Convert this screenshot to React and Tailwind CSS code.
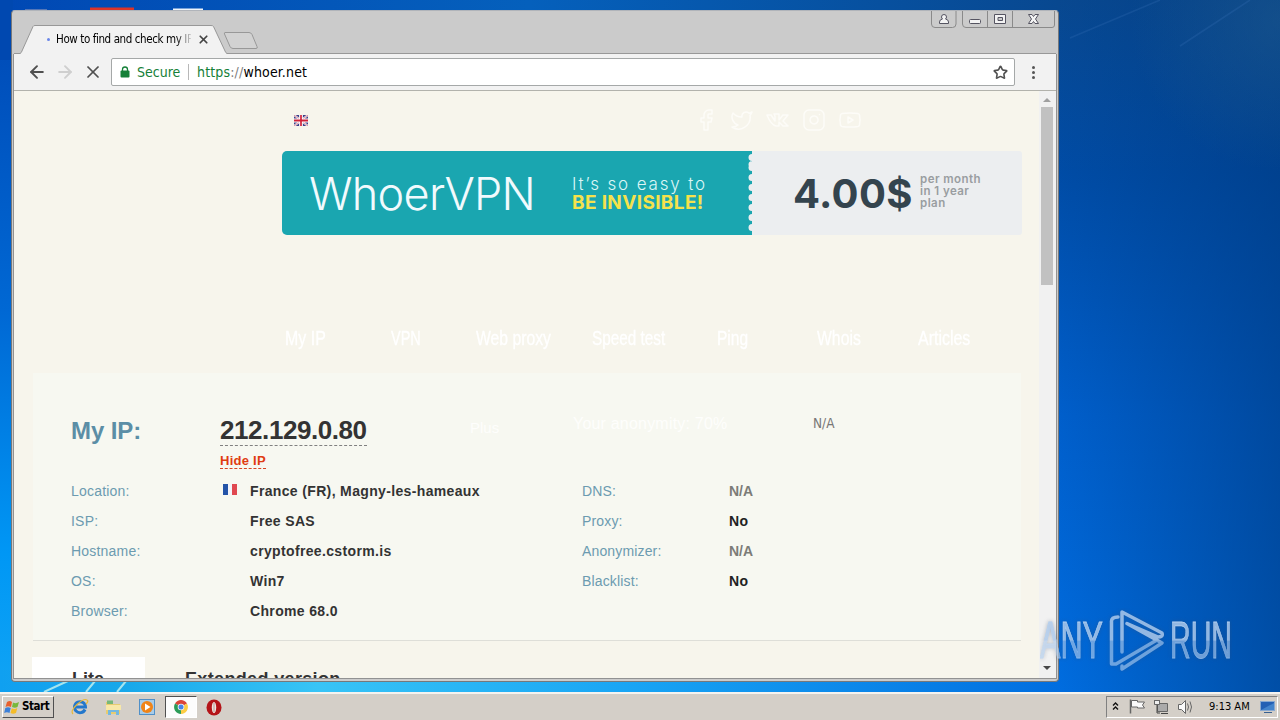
import { ArrowLeft, ArrowRight, X, Star, Facebook, Twitter, Instagram, Youtube } from 'lucide-react'

const NAV = [
  { label: 'My IP', cell: 'w-[106px]', text: 'scale-x-[0.76]' },
  { label: 'VPN', cell: 'w-[85px]', text: 'scale-x-[0.69]' },
  { label: 'Web proxy', cell: 'w-[116px]', text: 'scale-x-[0.75]' },
  { label: 'Speed test', cell: 'w-[125px]', text: 'scale-x-[0.73]' },
  { label: 'Ping', cell: 'w-[100px]', text: 'scale-x-[0.74]' },
  { label: 'Whois', cell: 'w-[101px]', text: 'scale-x-[0.75]' },
  { label: 'Articles', cell: 'w-[70px]', text: 'scale-x-[0.76]' },
]

const DETAILS = [
  { label: 'Location:', value: 'France (FR), Magny-les-hameaux', flag: true },
  { label: 'ISP:', value: 'Free SAS' },
  { label: 'Hostname:', value: 'cryptofree.cstorm.is' },
  { label: 'OS:', value: 'Win7' },
  { label: 'Browser:', value: 'Chrome 68.0' },
]

const CHECKS = [
  { label: 'DNS:', value: 'N/A', muted: true },
  { label: 'Proxy:', value: 'No' },
  { label: 'Anonymizer:', value: 'N/A', muted: true },
  { label: 'Blacklist:', value: 'No' },
]

function Wallpaper() {
  return (
    <svg className="absolute inset-0" width="1280" height="692" viewBox="0 0 1280 692">
      <defs>
        <linearGradient id="right" x1="0" y1="0" x2="0" y2="1">
          <stop offset="0" stopColor="#084890" />
          <stop offset="0.25" stopColor="#004ca6" />
          <stop offset="0.6" stopColor="#005fcc" />
          <stop offset="1" stopColor="#006de0" />
        </linearGradient>
        <linearGradient id="shade" x1="0" y1="0" x2="1" y2="0">
          <stop offset="0" stopColor="#003a80" stopOpacity="0" />
          <stop offset="1" stopColor="#003a80" stopOpacity="0.6" />
        </linearGradient>
        <radialGradient id="glow" gradientUnits="userSpaceOnUse" cx="1280" cy="20" r="150">
          <stop offset="0" stopColor="#2a6490" stopOpacity="0.4" />
          <stop offset="1" stopColor="#2a6490" stopOpacity="0" />
        </radialGradient>
        <linearGradient id="left" x1="0" y1="0" x2="0" y2="1">
          <stop offset="0" stopColor="#0048b4" />
          <stop offset="0.45" stopColor="#0068d4" />
          <stop offset="0.8" stopColor="#0097f5" />
          <stop offset="1" stopColor="#10a4f4" />
        </linearGradient>
        <linearGradient id="top" x1="0" y1="0" x2="1" y2="0">
          <stop offset="0" stopColor="#0048b4" />
          <stop offset="0.5" stopColor="#0560bc" />
          <stop offset="1" stopColor="#084890" />
        </linearGradient>
        <linearGradient id="bottom" x1="0" y1="0" x2="1" y2="0">
          <stop offset="0" stopColor="#10a0f0" />
          <stop offset="0.12" stopColor="#18a8ea" />
          <stop offset="0.3" stopColor="#38c4f6" />
          <stop offset="0.6" stopColor="#18a4f4" />
          <stop offset="1" stopColor="#006de0" />
        </linearGradient>
      </defs>
      <rect width="1280" height="692" fill="url(#right)" />
      <rect x="1055" width="225" height="692" fill="url(#shade)" />
      <rect x="1055" width="225" height="200" fill="url(#glow)" />
      <rect width="40" height="692" fill="url(#left)" />
      <rect width="1060" height="30" fill="url(#top)" />
      <rect width="13" height="60" fill="#0048b0" />
      <rect y="670" width="1060" height="22" fill="url(#bottom)" />
      <path d="M44 692L70 680M86 692L95 681M117 692L126 681" stroke="#a5e4ee" strokeWidth="2" />
      <path d="M1180 46L1250 0M1070 38L1160 0" stroke="#3a72b8" strokeWidth="1.500" opacity="0.25" />
      <path d="M25 9.500h22" stroke="#5577b8" />
      <path d="M90 9h44" stroke="#dc3428" strokeWidth="3" />
      <path d="M173 9.500h30" stroke="#eef4fa" strokeWidth="2" />
    </svg>
  )
}

function CaptionButtons() {
  return (
    <svg className="ml-auto" width="127" height="20" viewBox="930 11 127 20" fill="none" stroke="#8a8a8a">
      <path d="M931.500 10v14q0 3.500 3.500 3.500h17.500q3.500 0 3.500-3.500v-14M962.500 10v14q0 3.500 3.500 3.500h86q2.500 0 2.500-2.500v-15M987.500 10v17M1012.500 10v17" />
      <g stroke="#555461" fill="#f3f3f3">
        <path d="M939.500 23.500v-1.500q0-2.500 3-3q-1-1-1-2q0-2.500 2.500-2.500t2.500 2.500q0 1-1 2q3 .5 3 3v1.500z" />
        <rect x="969.500" y="19.500" width="11" height="4" rx="1" />
        <path fillRule="evenodd" d="M994.500 14.500h11v9h-11zM998 17.500v3h4.500v-3z" />
        <path d="M1028.500 14.500h3.500l1.500 2l1.500-2h3.500l-3 4.500l3 4.500h-3.500l-1.500-2l-1.500 2h-3.500l3-4.500z" />
      </g>
    </svg>
  )
}

function TitleBar() {
  return (
    <div className="relative flex h-[43px] shrink-0 items-start">
      <div className="absolute inset-x-px bottom-0 h-px bg-[#989898]" />
      <div className="relative ml-[7px] mt-[14px] h-[29px] w-[208px]">
        <svg className="absolute inset-0" width="208" height="29">
          <path d="M0 28.500L1.500 27L13 1.500Q13.500 .5 15 .5H191Q193 .5 193.500 1.500L205.500 27L207 28.500" fill="#f2f2f2" stroke="#989898" />
          <path d="M1 28.500H206" stroke="#f2f2f2" />
        </svg>
        <div className="relative flex h-[29px] items-center pl-[27px]">
          <span className="mr-[6px] size-[3px] shrink-0 rounded-full bg-[#6a86e8]" />
          <span className="w-[135px] shrink-0 overflow-hidden whitespace-nowrap font-['DejaVu_Sans_Condensed','DejaVu_Sans',sans-serif] text-[11.500px] tracking-[-0.400px] text-black [font-stretch:condensed] [mask-image:linear-gradient(to_right,black_120px,transparent_137px)]">
            How to find and check my IP
          </span>
          <X size={13} strokeWidth={3.200} className="ml-[6px] shrink-0 text-[#444]" />
        </div>
      </div>
      <svg className="-ml-[5px] mt-[20px]" width="36" height="19" fill="#d2d2d2" stroke="#989898">
        <path d="M2 1.500H26Q28 1.500 29 3.500L34 15.500Q35 17.500 33 17.500H10Q8 17.500 7 15.500L1.500 3Q1 1.500 2 1.500Z" />
      </svg>
      <CaptionButtons />
    </div>
  )
}

function Toolbar() {
  return (
    <div className="flex h-[37px] shrink-0 items-center border-b border-[#b2b2ac] bg-[#f2f2f2] pl-[9px]">
      <div className="flex w-7 justify-center text-[#505050]"><ArrowLeft size={20} strokeWidth={2.300} /></div>
      <div className="flex w-7 justify-center text-[#cfcfcf]"><ArrowRight size={20} strokeWidth={2.300} /></div>
      <div className="flex w-7 justify-center text-[#505050]"><X size={20} strokeWidth={2.100} /></div>
      <div className="ml-1 flex h-7 w-[904px] items-center rounded-[2px] border border-[#a5a8a8] bg-white pl-2 font-['DejaVu_Sans_Condensed','DejaVu_Sans',sans-serif] text-[14px] [font-stretch:condensed]">
        <svg width="10" height="12" viewBox="0 0 10 12">
          <path d="M2.500 5V3.500a2.500 2.500 0 0 1 5 0V5" fill="none" stroke="#158038" strokeWidth="1.300" />
          <rect x="0.500" y="4.500" width="9" height="7" rx="1" fill="#158038" />
        </svg>
        <span className="ml-[7px] w-[43px] whitespace-nowrap text-[#158038]">Secure</span>
        <span className="ml-2 h-4 w-px bg-[#b8b8b8]" />
        <span className="ml-2 whitespace-nowrap tracking-[0.160px] text-black">
          <span className="text-[#158038]">https</span><span className="text-[#808080]">://</span>whoer.net
        </span>
        <Star size={15} strokeWidth={2.600} className="ml-auto mr-[6px] text-[#505050]" />
      </div>
      <div className="ml-[17px] flex flex-col gap-[2px]">
        <i className="size-[3px] rounded-full bg-[#555]" />
        <i className="size-[3px] rounded-full bg-[#555]" />
        <i className="size-[3px] rounded-full bg-[#555]" />
      </div>
    </div>
  )
}

function UkFlag() {
  return (
    <svg width="14" height="11" viewBox="0 0 15 11" preserveAspectRatio="none">
      <rect width="15" height="11" fill="#3c4088" />
      <path d="M0 0L15 11M15 0L0 11" stroke="#f0e8ee" strokeWidth="2.200" />
      <path d="M0 0L15 11M15 0L0 11" stroke="#cc4860" strokeWidth="0.600" />
      <path d="M7.500 0V11M0 5.500H15" stroke="#fff" strokeWidth="4" />
      <path d="M7.500 0V11M0 5.500H15" stroke="#d02038" strokeWidth="1.800" />
    </svg>
  )
}

function VkIcon() {
  return (
    <svg width="24" height="24" viewBox="0 0 24 24" fill="none" stroke="currentColor" strokeWidth="1.500" strokeLinejoin="round">
      <path d="M1 7h4l4 6V8L8 6h5v6l4-5h5l-5 6l5 5h-5l-4-4v4h-3Q5 17 1 7z" />
    </svg>
  )
}

function Banner() {
  return (
    <div className="ml-[268px] mt-[19px] flex h-[84px] w-[740px] overflow-hidden rounded-l-[5px] rounded-r-[3px] bg-[#eceef0] font-['Inter',sans-serif]">
      <div className="relative flex w-[470px] items-center bg-[#1aa6b0] pl-[27px]">
        <span className="w-[263px] whitespace-nowrap text-[45px] font-light leading-none tracking-[-0.700px] text-[#f1fafd]">WhoerVPN</span>
        <div className="flex flex-col whitespace-nowrap">
          <span className="text-[17px] font-light leading-[18px] tracking-[1.850px] text-[#dcf6f6]">It’s so easy to</span>
          <span className="mt-px text-[19px] font-bold leading-[18px] tracking-[0.350px] text-[#f5e24c]">BE INVISIBLE!</span>
        </div>
        <svg className="absolute right-0 top-0" width="4" height="84" fill="#eceef0">
          <path d="M4 3a3 3 0 0 0 0 7a3 3 0 0 0 0 7M4 13a3 3 0 0 0 0 7M4 23a3 3 0 0 0 0 7M4 33a3 3 0 0 0 0 7M4 43a3 3 0 0 0 0 7M4 53a3 3 0 0 0 0 7M4 63a3 3 0 0 0 0 7M4 73a3 3 0 0 0 0 7" />
        </svg>
      </div>
      <div className="flex items-center pl-[41px]">
        <span className="mt-px w-[127px] whitespace-nowrap text-[40px] font-bold leading-none tracking-[0.350px] text-[#34444e]">4.00$</span>
        <div className="-mt-1 whitespace-nowrap text-[11.500px] font-semibold leading-3 tracking-[0.450px] text-[#999da0]">
          <p>per month</p>
          <p>in 1 year</p>
          <p>plan</p>
        </div>
      </div>
    </div>
  )
}

function InfoPanel() {
  return (
    <div className="ml-[19px] mt-[23px] flex h-[268px] w-[988px] flex-col border-b border-[#deded8] bg-[#f7f8f1] pl-[38px] pt-[41px]">
      <div className="flex h-[62px]">
        <h1 className="w-[149px] text-[24px] font-bold leading-[33px] tracking-[-0.100px] text-[#5b8ea6]">My IP:</h1>
        <div className="flex w-[250px] flex-col items-start font-bold">
          <span className="h-8 border-b border-dashed border-[#808080] text-[26px] leading-[32px] tracking-[-0.430px] text-[#333]">212.129.0.80</span>
          <span className="mt-[7px] h-4 border-b border-dashed border-[#d84422] text-[13px] leading-4 tracking-[0.250px] text-[#e03c12]">Hide IP</span>
        </div>
        <span className="w-[103px] text-[15px] leading-[27px] text-[#fefefc]">Plus</span>
        <span className="w-60 whitespace-nowrap text-[16px] leading-5 tracking-[0.200px] text-[#fefefc]">Your anonymity: 70%</span>
        <span className="font-['DejaVu_Sans_Condensed','DejaVu_Sans',sans-serif] text-[13.500px] leading-[18px] text-[#777] [font-stretch:condensed]">N/A</span>
      </div>
      <div className="flex whitespace-nowrap text-[14px] leading-[30px]">
        <dl className="w-[511px]">
          {DETAILS.map((row) => (
            <div key={row.label} className="flex h-[30px]">
              <dt className="w-[149px] tracking-[0.200px] text-[#6c9bb0]">{row.label}</dt>
              <dd className="flex w-[30px] pl-[3px] pt-[8px]">
                {row.flag && (
                  <span className="flex h-[11px] w-[14px]">
                    <i className="w-[5px] bg-[#2454a8]" />
                    <i className="w-1 bg-[#f4f4fa]" />
                    <i className="w-[5px] bg-[#e04850]" />
                  </span>
                )}
              </dd>
              <dd className="font-bold tracking-[0.350px] text-[#333]">{row.value}</dd>
            </div>
          ))}
        </dl>
        <dl>
          {CHECKS.map((row) => (
            <div key={row.label} className="flex h-[30px]">
              <dt className="w-[147px] tracking-[0.150px] text-[#6c9bb0]">{row.label}</dt>
              <dd className={row.muted ? 'font-bold text-[#7c7c78]' : 'font-bold tracking-[0.300px] text-[#222]'}>{row.value}</dd>
            </div>
          ))}
        </dl>
      </div>
    </div>
  )
}

function Page() {
  return (
    <main className="flex w-[1025px] flex-col overflow-hidden bg-[#f7f5ec] pt-[17px] font-['Liberation_Sans',Arial,sans-serif]">
      <div className="flex h-6 shrink-0 items-center pl-[280px]">
        <UkFlag />
        <div className="ml-[386px] flex items-center gap-3 text-[#fdfcf8]">
          <Facebook size={24} strokeWidth={1.500} />
          <Twitter size={24} strokeWidth={1.500} />
          <VkIcon />
          <Instagram size={24} strokeWidth={1.500} />
          <Youtube size={24} strokeWidth={1.500} />
        </div>
      </div>
      <div className="shrink-0"><Banner /></div>
      <nav className="ml-[271px] mt-[91px] flex h-6 shrink-0 items-center text-[21px] text-white">
        {NAV.map((item) => (
          <a key={item.label} className={`shrink-0 ${item.cell}`}>
            <span className={`inline-block origin-left whitespace-nowrap [-webkit-text-stroke:0.3px_white] ${item.text}`}>{item.label}</span>
          </a>
        ))}
      </nav>
      <div className="shrink-0"><InfoPanel /></div>
      <div className="ml-[18px] mt-4 flex h-[50px] shrink-0 text-[18px] font-bold leading-[45px] text-[#333]">
        <div className="w-[113px] bg-white pl-10">Lite</div>
        <div className="whitespace-nowrap pl-10 tracking-[0.350px]">Extended version</div>
      </div>
    </main>
  )
}

function Scrollbar() {
  return (
    <div className="flex w-[17px] flex-col items-center bg-[#f1f1f1] pb-2 pr-px pt-[7px]">
      <svg width="8" height="4"><path d="M0 4L4 0L8 4z" fill="#a0a0a0" /></svg>
      <div className="mt-[5px] h-[178px] w-[12px] bg-[#c1c1c1]" />
      <svg className="mt-auto" width="8" height="4"><path d="M0 0L4 4L8 0z" fill="#484848" /></svg>
    </div>
  )
}

function Watermark() {
  return (
    <div className="absolute left-[1040px] top-[608px] flex h-16 w-[192px] items-center font-['Liberation_Sans',sans-serif] text-[52px] leading-none text-[#b4d0f0]/80 drop-shadow-[0_0_2px_rgba(60,80,110,0.45)] [mask-image:linear-gradient(to_bottom,black_50%,rgba(0,0,0,0.75)_52%)]">
      <div className="w-[69px] shrink-0"><span className="inline-block origin-left scale-x-[0.59] [-webkit-text-stroke:0.8px_#b4d0f0]">ANY</span></div>
      <svg className="shrink-0" width="56" height="64" viewBox="0 0 56 64" fill="none" stroke="currentColor" strokeWidth="3.500" strokeLinejoin="round" strokeLinecap="round">
        <path d="M13 44V4L53 25Q54.500 29 49 29L18 15.500L53 35L13 61V58M9 9Q2 9 2.500 14V56H7L47 32.500" />
      </svg>
      <div className="ml-[5px] w-[60px] shrink-0"><span className="inline-block origin-left scale-x-[0.55] [-webkit-text-stroke:0.8px_#b4d0f0]">RUN</span></div>
    </div>
  )
}

function StartFlag() {
  return (
    <svg width="16" height="15" viewBox="0 0 16 15">
      <path d="M3 2Q6 0 8 2L7 7Q4 5.500 1.500 7z" fill="#e8602c" />
      <path d="M9 2.500Q12 4 15 2L13.500 7Q11 8.500 8 7z" fill="#78b83c" />
      <path d="M1.300 8Q4 6.500 6.700 8L5.500 13Q3 11.500 .2 13z" fill="#3c80d8" />
      <path d="M7.800 8.300Q10.500 9.800 13.300 8L12 13Q9 14.500 6.500 13z" fill="#f4bc28" />
    </svg>
  )
}

function QuickLaunch() {
  return (
    <>
      <svg className="ml-[17px]" width="18" height="18" viewBox="0 0 18 18" fill="none">
        <path d="M14 11.500A5.500 5.500 0 1 1 14.500 9H5" stroke="#2478cc" strokeWidth="3" />
        <path d="M2 16Q-1 13 6 6.500T16 2Q18 3 15 6" stroke="#e8b838" strokeWidth="1.200" />
      </svg>
      <svg className="ml-4" width="17" height="17" viewBox="0 0 17 17">
        <path d="M1 3h6l1 2h7v10H1z" fill="#e8cc70" />
        <path d="M2 1.500h6V5H2z" fill="#78b878" />
        <path d="M1 6h15v5H1z" fill="#f8e8a8" />
        <path d="M3 16v-5h11v5h-3v-3H6v3z" fill="#74b8e0" />
      </svg>
      <svg className="ml-[17px]" width="17" height="17" viewBox="0 0 17 17">
        <rect x="0.500" y="0.500" width="15" height="15" fill="#a8cce8" stroke="#5090c8" />
        <circle cx="8" cy="8" r="6" fill="#f08418" />
        <path d="M6 4.500L11.500 8L6 11.500z" fill="#fff" />
      </svg>
      <div className="ml-[9px] flex h-[22px] w-8 items-center justify-center border border-white border-l-[#505050] border-t-[#505050] bg-[#fcfcfc]">
        <svg width="14" height="14" viewBox="0 0 14 14">
          <path d="M7 7L1 3.500A7 7 0 0 1 13 3.500z" fill="#dc4438" />
          <path d="M7 7L13 3.500A7 7 0 0 1 7 14z" fill="#fccc44" />
          <path d="M7 7L7 14A7 7 0 0 1 1 3.500z" fill="#2c9c58" />
          <circle cx="7" cy="7" r="3.300" fill="#f4f4f4" />
          <circle cx="7" cy="7" r="2.500" fill="#4884e8" />
        </svg>
      </div>
      <svg className="ml-[9px]" width="16" height="17" viewBox="0 0 16 17">
        <ellipse cx="8" cy="8.500" rx="7.500" ry="8" fill="#b41418" />
        <ellipse cx="8" cy="8.500" rx="2.200" ry="5.500" fill="#f0e4e0" />
        <path d="M8 4v9" stroke="#b89890" />
      </svg>
    </>
  )
}

function Tray() {
  return (
    <div className="ml-auto mr-[2px] flex h-[22px] w-[172px] items-center border border-white border-l-[#808080] border-t-[#808080] pl-1">
      <svg width="84" height="20" viewBox="1111 697 84 20" fill="none" stroke="#666" className="shrink-0">
        <path d="M1113 705.500l2.500-2.500l2.500 2.500M1113 709.500l2.500-2.500l2.500 2.500" stroke="#111" strokeWidth="1.400" />
        <path d="M1130.500 699.500v14" strokeWidth="1.500" />
        <path d="M1131.500 700.500h6v1.500h7l-2 3l2 3h-7v-1h-6z" fill="#fafafa" />
        <path d="M1157.500 703.500h10v8h-10z" fill="#aaa" />
        <path d="M1154.500 700v4h5v-4M1157 704v9h3M1161 713.500h7" stroke="#444" />
        <path d="M1154.500 700.500h5v4h-5z" fill="#eee" />
        <path d="M1178.500 704.500h3l4-4v13l-4-4h-3z" fill="#fafafa" />
        <path d="M1187.500 703.500q2 3.500 0 7M1190 701.500q3 5.500 0 11" />
      </svg>
      <span className="ml-[14px] w-[51px] shrink-0 whitespace-nowrap font-['DejaVu_Sans_Condensed','DejaVu_Sans',sans-serif] text-[11px] text-black [font-stretch:condensed]">9:13 AM</span>
      <svg className="shrink-0" width="15" height="14" viewBox="0 0 15 14">
        <rect x="0.500" y="1.500" width="14" height="9" fill="#2460b4" stroke="#88a8d0" />
        <path d="M1 10L14 3v7z" fill="#4484cc" />
        <path d="M4 12.500h8" stroke="#386090" />
      </svg>
    </div>
  )
}

export default function App() {
  return (
    <div className="flex h-[720px] w-[1280px] flex-col overflow-hidden">
      <div className="relative h-[692px]">
        <Wallpaper />
        <div className="absolute left-[11px] top-[10px] flex h-[672px] w-[1048px] flex-col rounded-[4px] border border-[#77787a] border-t-[#b0b4ba] bg-[#cbcbcb] px-px pb-[2px]">
          <TitleBar />
          <div className="flex min-h-0 flex-1 flex-col border-x border-b border-[#929292]">
            <Toolbar />
            <div className="flex min-h-0 flex-1">
              <Page />
              <Scrollbar />
            </div>
          </div>
        </div>
        <Watermark />
      </div>
      <footer className="relative flex h-7 items-center border-t-2 border-[#f5f3ef] bg-[#d4cfc8] pl-[2px]">
        <button className="flex h-[22px] w-[52px] items-center gap-[2px] border border-[#505050] border-l-white border-t-white pl-px font-['DejaVu_Sans_Condensed','DejaVu_Sans',sans-serif] text-[11.500px] font-bold tracking-[-0.450px] text-black [font-stretch:condensed]">
          <StartFlag />
          Start
        </button>
        <QuickLaunch />
        <Tray />
      </footer>
    </div>
  )
}
